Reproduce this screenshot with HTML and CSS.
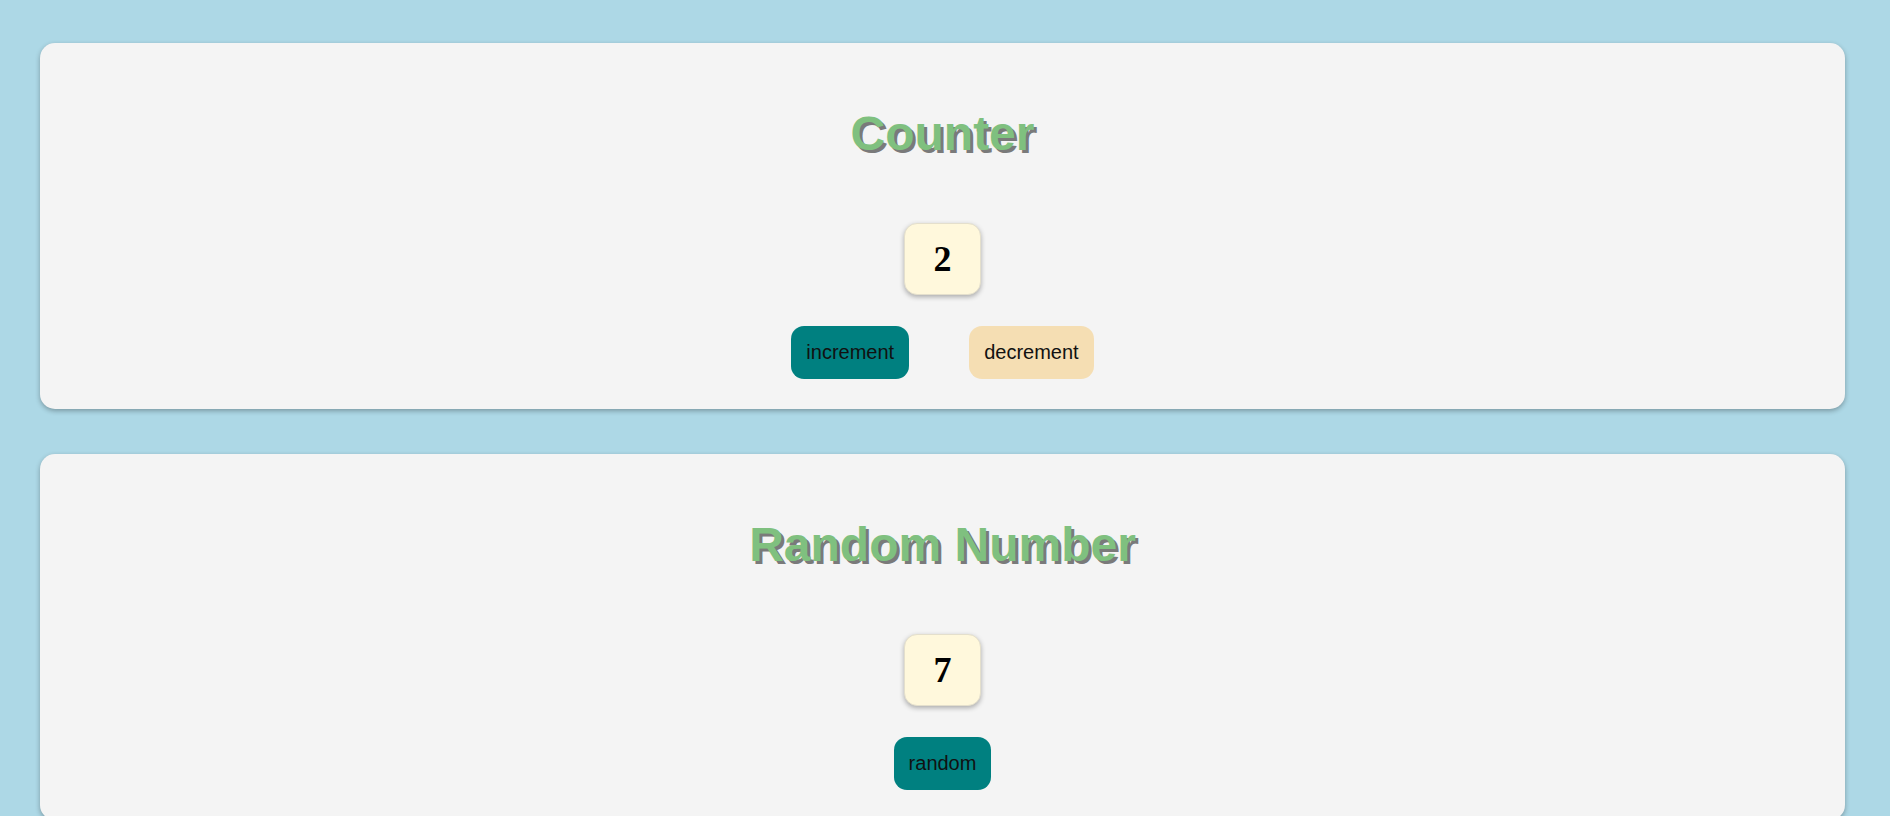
FILE: index.html
```html
<!DOCTYPE html>
<html>
<head>
<meta charset="utf-8">
<link rel="stylesheet" href="styles.css">
</head>
<body>
<main class="page">
  <section class="card">
    <h1 class="title">Counter</h1>
    <div class="value">2</div>
    <div class="actions">
      <button class="btn btn-teal">increment</button>
      <button class="btn btn-wheat">decrement</button>
    </div>
  </section>
  <section class="card">
    <h1 class="title">Random Number</h1>
    <div class="value">7</div>
    <div class="actions">
      <button class="btn btn-teal">random</button>
    </div>
  </section>
</main>
</body>
</html>
```

FILE: styles.css
```css
html, body {
  margin: 0;
  padding: 0;
}
body {
  background: #add8e6;
  font-family: "Liberation Sans", Arial, sans-serif;
}
.page {
  padding: 43px 45px 0 40px;
  display: flex;
  flex-direction: column;
  gap: 45px;
}
.card {
  background: #f4f4f4;
  border-radius: 15px;
  box-shadow: 0 2px 5px rgba(0, 0, 0, 0.3);
  padding: 30px 0;
  display: flex;
  flex-direction: column;
  align-items: center;
}
.title {
  margin: 33px 0 62px;
  font-size: 48px;
  font-weight: bold;
  line-height: 55px;
  color: #7fc07f;
  text-shadow: 3px 3px 0 #7a7a7a;
}
.value {
  width: 77px;
  height: 72px;
  box-sizing: border-box;
  border: 1px solid #e4dfcc;
  border-radius: 13px;
  background: #fff8dc;
  box-shadow: 0 2px 5px rgba(0, 0, 0, 0.3);
  display: flex;
  align-items: center;
  justify-content: center;
  font-family: "Liberation Serif", "Times New Roman", serif;
  font-weight: bold;
  font-size: 36px;
  color: #000;
  margin-bottom: 31px;
}
.actions {
  display: flex;
  gap: 60px;
}
.btn {
  font-family: "Liberation Sans", Arial, sans-serif;
  font-size: 20px;
  line-height: 23px;
  padding: 15px;
  border: none;
  border-radius: 13px;
  color: #111;
  cursor: pointer;
}
.btn-teal {
  background: #008080;
}
.btn-wheat {
  background: #f5deb3;
}
```
